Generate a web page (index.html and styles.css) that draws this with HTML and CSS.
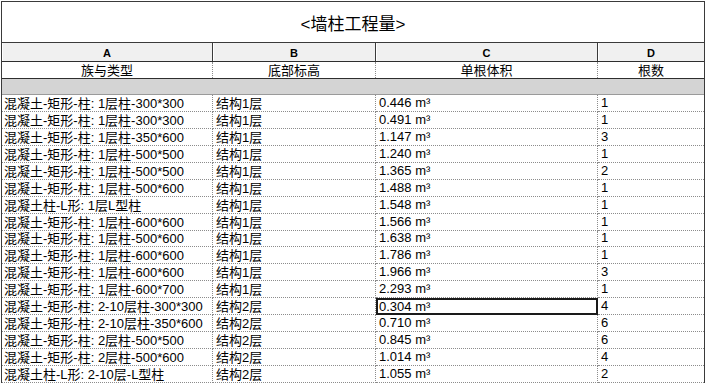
FILE: index.html
```html
<!DOCTYPE html>
<html lang="zh-CN">
<head>
<meta charset="utf-8">
<title>墙柱工程量</title>
<link rel="stylesheet" href="styles.css">
</head>
<body>
<div class="sheet">
  <div class="title">&lt;墙柱工程量&gt;</div>
  <div class="row letters">
    <div class="cell">A</div><div class="cell">B</div><div class="cell">C</div><div class="cell">D</div>
  </div>
  <div class="row names">
    <div class="cell">族与类型</div><div class="cell">底部标高</div><div class="cell">单根体积</div><div class="cell">根数</div>
  </div>
  <div class="band"></div>
  <div class="row data"><div class="cell">混凝土-矩形-柱: 1层柱-300*300</div><div class="cell">结构1层</div><div class="cell">0.446 m³</div><div class="cell">1</div></div>
  <div class="row data"><div class="cell">混凝土-矩形-柱: 1层柱-300*300</div><div class="cell">结构1层</div><div class="cell">0.491 m³</div><div class="cell">1</div></div>
  <div class="row data"><div class="cell">混凝土-矩形-柱: 1层柱-350*600</div><div class="cell">结构1层</div><div class="cell">1.147 m³</div><div class="cell">3</div></div>
  <div class="row data"><div class="cell">混凝土-矩形-柱: 1层柱-500*500</div><div class="cell">结构1层</div><div class="cell">1.240 m³</div><div class="cell">1</div></div>
  <div class="row data"><div class="cell">混凝土-矩形-柱: 1层柱-500*500</div><div class="cell">结构1层</div><div class="cell">1.365 m³</div><div class="cell">2</div></div>
  <div class="row data"><div class="cell">混凝土-矩形-柱: 1层柱-500*600</div><div class="cell">结构1层</div><div class="cell">1.488 m³</div><div class="cell">1</div></div>
  <div class="row data"><div class="cell">混凝土柱-L形: 1层L型柱</div><div class="cell">结构1层</div><div class="cell">1.548 m³</div><div class="cell">1</div></div>
  <div class="row data"><div class="cell">混凝土-矩形-柱: 1层柱-600*600</div><div class="cell">结构1层</div><div class="cell">1.566 m³</div><div class="cell">1</div></div>
  <div class="row data"><div class="cell">混凝土-矩形-柱: 1层柱-500*600</div><div class="cell">结构1层</div><div class="cell">1.638 m³</div><div class="cell">1</div></div>
  <div class="row data"><div class="cell">混凝土-矩形-柱: 1层柱-600*600</div><div class="cell">结构1层</div><div class="cell">1.786 m³</div><div class="cell">1</div></div>
  <div class="row data"><div class="cell">混凝土-矩形-柱: 1层柱-600*600</div><div class="cell">结构1层</div><div class="cell">1.966 m³</div><div class="cell">3</div></div>
  <div class="row data"><div class="cell">混凝土-矩形-柱: 1层柱-600*700</div><div class="cell">结构1层</div><div class="cell">2.293 m³</div><div class="cell">1</div></div>
  <div class="row data"><div class="cell">混凝土-矩形-柱: 2-10层柱-300*300</div><div class="cell">结构2层</div><div class="cell selected">0.304 m³</div><div class="cell">4</div></div>
  <div class="row data"><div class="cell">混凝土-矩形-柱: 2-10层柱-350*600</div><div class="cell">结构2层</div><div class="cell">0.710 m³</div><div class="cell">6</div></div>
  <div class="row data"><div class="cell">混凝土-矩形-柱: 2层柱-500*500</div><div class="cell">结构2层</div><div class="cell">0.845 m³</div><div class="cell">6</div></div>
  <div class="row data"><div class="cell">混凝土-矩形-柱: 2层柱-500*600</div><div class="cell">结构2层</div><div class="cell">1.014 m³</div><div class="cell">4</div></div>
  <div class="row data"><div class="cell">混凝土柱-L形: 2-10层-L型柱</div><div class="cell">结构2层</div><div class="cell">1.055 m³</div><div class="cell">2</div></div>
</div>
</body>
</html>
```

FILE: styles.css
```css
html, body {
  margin: 0;
  padding: 0;
  background: #ffffff;
}

body {
  font-family: "Liberation Sans", "Noto Sans CJK SC", sans-serif;
  color: #000;
  overflow: hidden;
}

.sheet {
  width: 704px;
  margin: 1px 0 0 1px;
  box-sizing: border-box;
  border: 1px solid #3a3a3a;
  border-bottom: none;
}

.title {
  height: 41px;
  box-sizing: border-box;
  border-bottom: 1px solid #3a3a3a;
  display: flex;
  align-items: center;
  justify-content: center;
  font-size: 17px;
  padding-top: 1px;
}

.row {
  display: grid;
  grid-template-columns: 211px 163px 222px 106px;
}

.cell {
  box-sizing: border-box;
  white-space: nowrap;
  overflow: hidden;
  display: flex;
  align-items: center;
}

.letters {
  height: 19px;
  background: #f0f0f0;
  border-bottom: 1px solid #2e2e2e;
  box-sizing: border-box;
}

.letters .cell {
  justify-content: center;
  font-weight: bold;
  font-size: 11px;
  border-right: 1px solid #3a3a3a;
  box-shadow: inset 1px 0 0 #ffffff;
  padding-top: 1px;
}

.letters .cell:last-child,
.names .cell:last-child,
.data .cell:last-child {
  border-right: none;
}

.names {
  height: 17px;
  border-bottom: 1px solid #2e2e2e;
  box-sizing: border-box;
}

.names .cell {
  justify-content: center;
  font-size: 13px;
  border-right: 1px dotted #8c8c8c;
  padding-bottom: 1px;
}

.band {
  height: 16px;
  box-sizing: border-box;
  background: #d4d4d4;
  border-bottom: 1px solid #9a9a9a;
}

.data {
  height: 16.94px;
}

.data .cell {
  font-size: 13px;
  padding-left: 2px;
  padding-bottom: 1px;
  border-right: 1px dotted #8c8c8c;
  border-bottom: 1px dotted #8c8c8c;
}

.data .cell:nth-child(n+2) {
  padding-left: 3px;
}

.data .cell.selected {
  border: 1px solid #1a1a1a;
  box-shadow: inset 0 0 0 1px #1a1a1a;
  padding-left: 2px;
}
```
